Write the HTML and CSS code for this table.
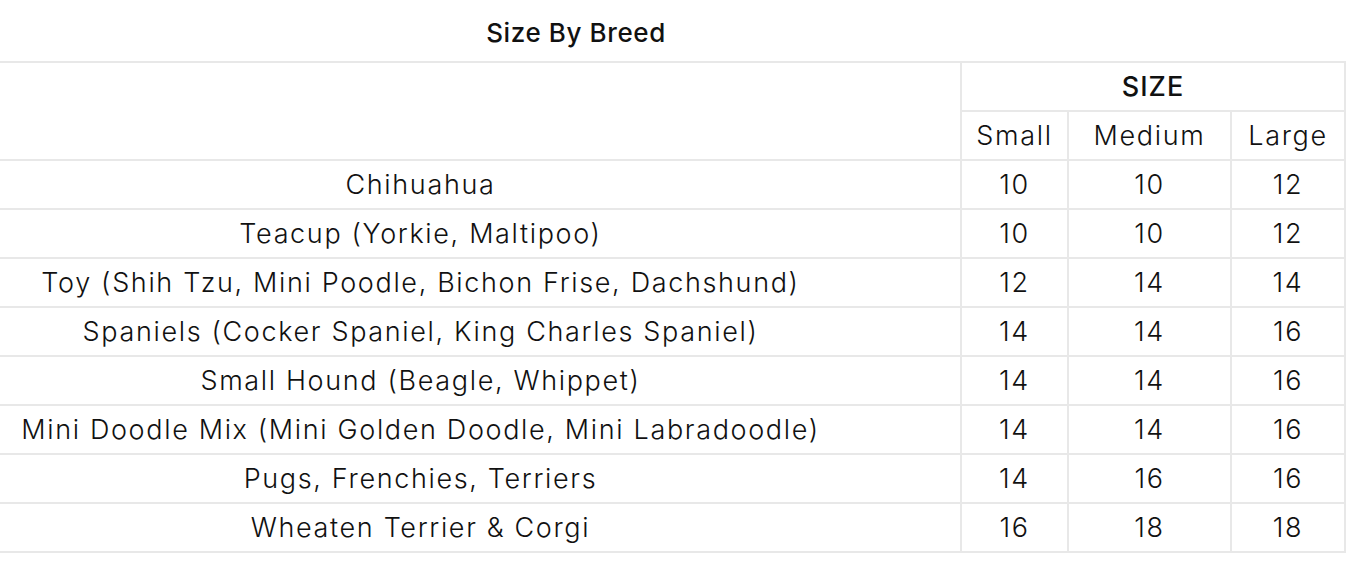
FILE: index.html
```html
<!DOCTYPE html>
<html>
<head>
<meta charset="utf-8">
<link rel="stylesheet" href="styles.css">
</head>
<body>
<div class="title">Size By Breed</div>
<table class="chart">
  <colgroup>
    <col class="c-breed">
    <col class="c-small">
    <col class="c-medium">
    <col class="c-large">
  </colgroup>
  <thead>
    <tr class="h1">
      <th class="blank" rowspan="2"></th>
      <th class="size" colspan="3">SIZE</th>
    </tr>
    <tr class="h2">
      <th>Small</th>
      <th>Medium</th>
      <th>Large</th>
    </tr>
  </thead>
  <tbody>
    <tr><td class="breed">Chihuahua</td><td>10</td><td>10</td><td>12</td></tr>
    <tr><td class="breed">Teacup (Yorkie, Maltipoo)</td><td>10</td><td>10</td><td>12</td></tr>
    <tr><td class="breed">Toy (Shih Tzu, Mini Poodle, Bichon Frise, Dachshund)</td><td>12</td><td>14</td><td>14</td></tr>
    <tr><td class="breed">Spaniels (Cocker Spaniel, King Charles Spaniel)</td><td>14</td><td>14</td><td>16</td></tr>
    <tr><td class="breed">Small Hound (Beagle, Whippet)</td><td>14</td><td>14</td><td>16</td></tr>
    <tr><td class="breed">Mini Doodle Mix (Mini Golden Doodle, Mini Labradoodle)</td><td>14</td><td>14</td><td>16</td></tr>
    <tr><td class="breed">Pugs, Frenchies, Terriers</td><td>14</td><td>16</td><td>16</td></tr>
    <tr><td class="breed">Wheaten Terrier &amp; Corgi</td><td>16</td><td>18</td><td>18</td></tr>
  </tbody>
</table>
</body>
</html>
```

FILE: styles.css
```css
html, body {
  margin: 0;
  padding: 0;
  background: #ffffff;
}
body {
  font-family: "Inter", "Liberation Sans", sans-serif;
  color: #111111;
}
.title {
  height: 61px;
  display: flex;
  align-items: center;
  justify-content: center;
  padding-right: 196px;
  padding-top: 4px;
  box-sizing: border-box;
  font-size: 26px;
  font-weight: 500;
  letter-spacing: 0.6px;
}
.chart {
  border-collapse: collapse;
  table-layout: fixed;
  width: 1345px;
  font-size: 27px;
  font-weight: 300;
  letter-spacing: 1.65px;
}
.c-breed { width: 961px; }
.c-small { width: 107px; }
.c-medium { width: 163px; }
.c-large { width: 114px; }
.chart th, .chart td {
  border: 2px solid #e8e8e8;
  text-align: center;
  vertical-align: middle;
  padding: 0;
  font-weight: 300;
}
.chart tr { height: 49px; }
.chart .h1, .chart .h2 { height: 49px; }
.chart .blank { border-left: none; }
.chart .breed { border-left: none; padding-right: 119px; }
.chart .size { font-weight: 500; letter-spacing: 1px; }
```
